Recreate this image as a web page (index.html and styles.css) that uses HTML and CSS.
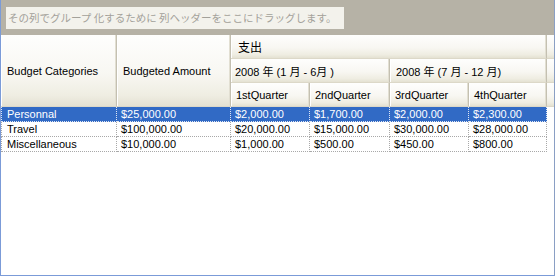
FILE: index.html
```html
<!DOCTYPE html>
<html lang="ja">
<head>
<meta charset="utf-8">
<link rel="stylesheet" href="styles.css">
</head>
<body>
<div class="grid">
  <div class="group-panel">
    <div class="group-box">その列でグループ 化するために 列ヘッダーをここにドラッグします。</div>
  </div>
  <div class="header">
    <div class="hcell c1 span3"><span>Budget Categories</span></div>
    <div class="hcell c2 span3"><span>Budgeted Amount</span></div>
    <div class="hcell top">支出</div>
    <div class="hcell fill r1"></div>
    <div class="hcell half1">2008 年 (1 月 - 6月 )</div>
    <div class="hcell half2">2008 年 (7 月 - 12 月)</div>
    <div class="hcell fill r2"></div>
    <div class="hcell q">1stQuarter</div>
    <div class="hcell q">2ndQuarter</div>
    <div class="hcell q">3rdQuarter</div>
    <div class="hcell q">4thQuarter</div>
    <div class="hcell fill r3"></div>
  </div>
  <div class="rows">
    <div class="row selected">
      <div class="cell">Personnal</div>
      <div class="cell">$25,000.00</div>
      <div class="cell">$2,000.00</div>
      <div class="cell">$1,700.00</div>
      <div class="cell">$2,000.00</div>
      <div class="cell">$2,300.00</div>
    </div>
    <div class="row">
      <div class="cell">Travel</div>
      <div class="cell">$100,000.00</div>
      <div class="cell">$20,000.00</div>
      <div class="cell">$15,000.00</div>
      <div class="cell">$30,000.00</div>
      <div class="cell">$28,000.00</div>
    </div>
    <div class="row">
      <div class="cell">Miscellaneous</div>
      <div class="cell">$10,000.00</div>
      <div class="cell">$1,000.00</div>
      <div class="cell">$500.00</div>
      <div class="cell">$450.00</div>
      <div class="cell">$800.00</div>
    </div>
  </div>
</div>
</body>
</html>
```

FILE: styles.css
```css
html, body {
  margin: 0;
  padding: 0;
  background: #ffffff;
}

.grid {
  width: 555px;
  height: 276px;
  box-sizing: border-box;
  border: 1px solid #7b9bd8;
  border-top: none;
  border-right-color: #8a9fc4;
  background: #ffffff;
  font-family: "Liberation Sans", "Noto Sans CJK JP", sans-serif;
  font-size: 11px;
  color: #000;
  display: flex;
  flex-direction: column;
}

.group-panel {
  height: 35px;
  box-sizing: border-box;
  background: #b6b2a6;
  padding: 7px 0 0 5px;
}

.group-box {
  width: 338px;
  height: 22px;
  box-sizing: border-box;
  background: #f3f2ec;
  color: #a3a19a;
  font-family: "Noto Sans CJK JP", sans-serif;
  font-size: 10.5px;
  line-height: 22px;
  padding-left: 2px;
  white-space: nowrap;
}

.header {
  display: grid;
  grid-template-columns: 116px 114px 79px 80px 79px 78px 1fr;
  grid-template-rows: 24px 24px 24px;
  height: 72px;
}

.hcell {
  box-sizing: border-box;
  background: linear-gradient(to bottom, #fefefd 0%, #f8f7f2 55%, #efede2 85%, #e4e1d2 100%);
  border-right: 1px solid #c4c0b1;
  box-shadow: inset -1px 0 #e2dfd2, inset 1px 0 #ffffff;
  border-bottom: 1px solid #dcd8c8;
  display: flex;
  align-items: center;
  padding-left: 5px;
  white-space: nowrap;
}

.span3 {
  grid-row: 1 / span 3;
}

.c1 {
  grid-column: 1;
  padding-left: 6px;
}

.c2 {
  grid-column: 2;
  padding-left: 6px;
}

.top {
  grid-column: 3 / span 4;
  grid-row: 1;
  font-size: 12px;
  padding-left: 7px;
}

.half1 {
  grid-column: 3 / span 2;
  grid-row: 2;
  padding-left: 4px;
}

.half2 {
  grid-column: 5 / span 2;
  grid-row: 2;
  padding-left: 6px;
}

.q {
  grid-row: 3;
  padding-left: 5px;
}

.fill {
  grid-column: 7;
  border-right: none;
  box-shadow: none;
}

.r1 { grid-row: 1; }
.r2 { grid-row: 2; }
.r3 { grid-row: 3; }

.rows {
  display: flex;
  flex-direction: column;
}

.row {
  display: grid;
  grid-template-columns: 116px 114px 79px 80px 79px 78px;
  height: 15px;
}

.cell {
  box-sizing: border-box;
  border-right: 1px dotted #a8a8a8;
  border-bottom: 1px dotted #a8a8a8;
  padding-left: 4px;
  line-height: 14px;
  white-space: nowrap;
}

.cell:first-child {
  border-left: 1px dotted #a8a8a8;
  padding-left: 5px;
}

.selected .cell {
  background: #316ac5;
  color: #ffffff;
  border-color: #dfe6f3;
}
```
